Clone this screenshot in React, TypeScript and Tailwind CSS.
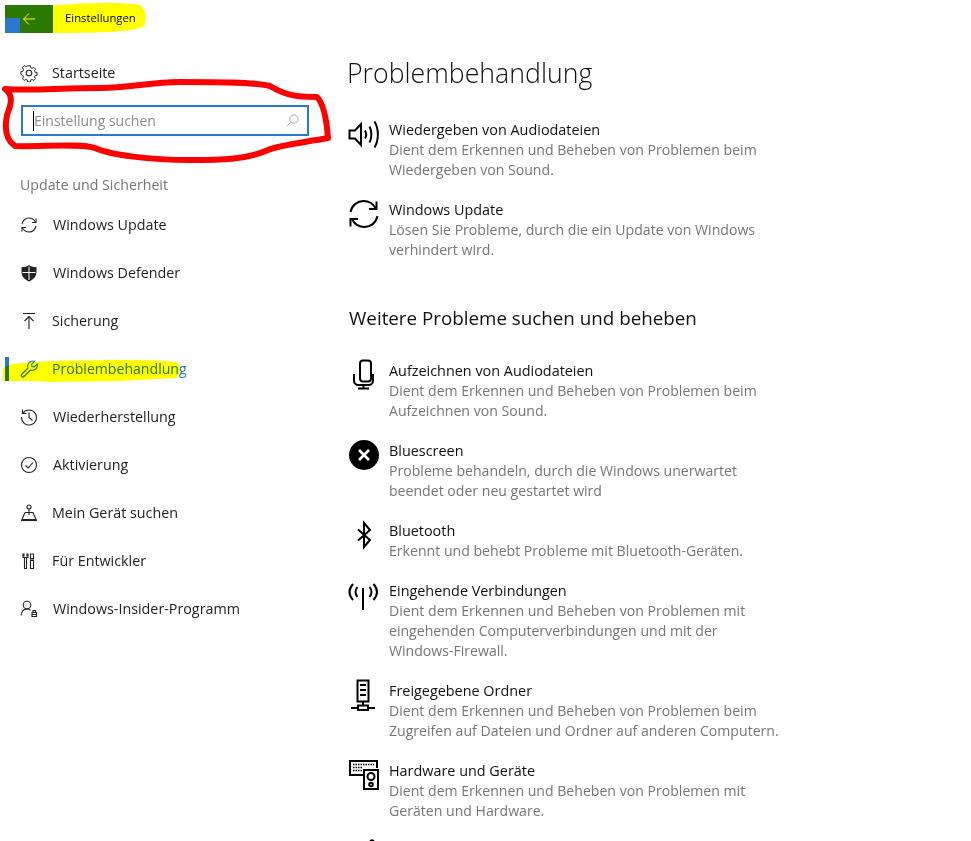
import type { ReactNode } from "react";

const FONT = "font-['Open_Sans','Noto_Sans',sans-serif]";

function SideIcon({ children }: { children: ReactNode }) {
	return (
		<svg
			viewBox="0 0 18 18"
			className="w-[18px] h-[18px] shrink-0"
			fill="none"
			stroke="currentColor"
			strokeWidth="1.100"
		>
			{children}
		</svg>
	);
}

function BigIcon({ children }: { children: ReactNode }) {
	return (
		<svg
			viewBox="0 0 32 32"
			className="w-8 h-8 shrink-0 -mt-0.5 text-black"
			fill="none"
			stroke="currentColor"
			strokeWidth="2"
		>
			{children}
		</svg>
	);
}

const sideItems: {
	label: string;
	icon: ReactNode;
	active?: boolean;
	wide?: boolean;
}[] = [
	{
		label: "Windows Update",
		wide: true,
		icon: (
			<>
				<path d="M2 8C3 4 6 2 9 2c3 0 5 1.500 6.500 4" />
				<path d="M16 2.500V6.500H12" />
				<path d="M16 10c-1 4-4 6-7 6-3 0-5-1.500-6.500-4" />
				<path d="M2 15.500V11.500H6" />
			</>
		),
	},
	{
		label: "Windows Defender",
		wide: true,
		icon: (
			<path
				d="M9 1c2 1.500 4.500 2.200 7.500 2.200V8c0 4.500-3 7.500-7.500 9.500C4.500 15.500 1.500 12.500 1.500 8V3.200C4.500 3.200 7 2.500 9 1zM8.500 2.500V8H2.500v1H8.500V16h1V9h6V8h-6V2.500z"
				fill="currentColor"
				fillRule="evenodd"
				stroke="none"
			/>
		),
	},
	{
		label: "Sicherung",
		icon: (
			<>
				<path d="M3 1.500H15" />
				<path d="M9 17V4.500" />
				<path d="M4.500 9L9 4.500L13.500 9" />
			</>
		),
	},
	{
		label: "Problembehandlung",
		active: true,
		icon: (
			<path d="M1.500 14.500L8 8c-.8-2.500 0-4.500 1.500-5.800C11 1 13 .8 14.500 1.300L11.500 4.300l.5 2.200 2.200.5 3-3c.5 2-.2 3.800-1.500 5-1.500 1.300-3.300 1.700-5.200 1L4 16.500c-.6.600-1.500.600-2.200 0-.7-.6-.8-1.400-.3-2z" />
		),
	},
	{
		label: "Wiederherstellung",
		wide: true,
		icon: (
			<>
				<path d="M3 5a7.500 7.500 0 1 1-1.500 4" />
				<path d="M2.500 1.500V5.500H6.500" />
				<path d="M9 4.500V9.500L12.500 12.500" />
			</>
		),
	},
	{
		label: "Aktivierung",
		wide: true,
		icon: (
			<>
				<circle cx="9" cy="9" r="7.500" />
				<path d="M5.500 9.500L8 12L13 6.500" />
			</>
		),
	},
	{
		label: "Mein Gerät suchen",
		icon: (
			<>
				<circle cx="9" cy="3" r="2" />
				<path d="M9 5V11" />
				<path d="M5 8.500H13L16 15.500H2L5 8.500" />
				<path d="M1 16.500H17" />
			</>
		),
	},
	{
		label: "Für Entwickler",
		icon: (
			<>
				<path d="M4 1.500V4.500M7 1.500V4.500M3 1.500V5.500H8V1.500M4.500 5.500V8M6.500 5.500V8M4.500 8V16.500H6.500V8" />
				<path d="M10.500 2H13.500V6.500H10.500ZM11 6.500V8.500H13V6.500M10.500 8.500H13.500V16.500H10.500Z" />
			</>
		),
	},
	{
		label: "Windows-Insider-Programm",
		wide: true,
		icon: (
			<>
				<circle cx="7" cy="5" r="3.800" />
				<path d="M1 15.500C1.500 11.500 3.500 9 7 9c1.500 0 2.800.5 3.500 1.500" />
				<path d="M12 12.500H16.500V16.500H12ZM13 12.500V10.500H15.500V12.500M12 14.500H16.500" />
			</>
		),
	},
];

const mainItems: {
	title: string;
	lines: string[];
	icon: ReactNode;
}[] = [
	{
		title: "Aufzeichnen von Audiodateien",
		lines: [
			"Dient dem Erkennen und Beheben von Problemen beim",
			"Aufzeichnen von Sound.",
		],
		icon: (
			<>
				<rect x="12" y="1.500" width="11" height="21" rx="3" />
				<path d="M6 15v6.500c0 2.500 2 4.500 4.500 4.500h10c2.500 0 4.500-2 4.500-4.500V15" />
				<path d="M15.500 26V29M10 29.500H21" />
			</>
		),
	},
	{
		title: "Bluescreen",
		lines: [
			"Probleme behandeln, durch die Windows unerwartet",
			"beendet oder neu gestartet wird",
		],
		icon: (
			<>
				<circle cx="16" cy="16" r="15" fill="currentColor" stroke="none" />
				<path
					d="M11 11L21 21M21 11L11 21"
					stroke="white"
					strokeWidth="2.600"
				/>
			</>
		),
	},
	{
		title: "Bluetooth",
		lines: ["Erkennt und behebt Probleme mit Bluetooth-Geräten."],
		icon: <path d="M10 10.500L22 21L16 28V4L22 11L10 21.500" />,
	},
	{
		title: "Eingehende Verbindungen",
		lines: [
			"Dient dem Erkennen und Beheben von Problemen mit",
			"eingehenden Computerverbindungen und mit der",
			"Windows-Firewall.",
		],
		icon: (
			<>
				<path d="M15 9V31" />
				<path d="M5 5Q-2 13 5 21" />
				<path d="M9.500 8Q5.500 13 9.500 18" />
				<path d="M21.500 8Q25.500 13 21.500 18" />
				<path d="M25.500 5Q32.500 13 25.500 21" />
			</>
		),
	},
	{
		title: "Freigegebene Ordner",
		lines: [
			"Dient dem Erkennen und Beheben von Problemen beim",
			"Zugreifen auf Dateien und Ordner auf anderen Computern.",
		],
		icon: (
			<>
				<rect x="9.500" y="1.500" width="11" height="21" />
				<path d="M12 6H18M12 11H18M12 16H18" />
				<path d="M15 22.500V26M3 29H10M20 29H27" />
				<rect x="10" y="26.500" width="10" height="4.500" />
			</>
		),
	},
	{
		title: "Hardware und Geräte",
		lines: [
			"Dient dem Erkennen und Beheben von Problemen mit",
			"Geräten und Hardware.",
		],
		icon: (
			<>
				<path d="M15 16H2V2H29V9" />
				<path
					d="M5 5.500H26M5 8.500H14M5 11.500H14"
					strokeDasharray="1.500 1"
					strokeWidth="1.500"
				/>
				<rect x="16" y="11" width="14" height="19" />
				<circle cx="23" cy="17.500" r="3.500" />
				<circle cx="23" cy="25.500" r="1.800" />
			</>
		),
	},
];

function MainRow({
	title,
	lines,
	icon,
}: {
	title: string;
	lines: string[];
	icon: ReactNode;
}) {
	return (
		<div className="flex mb-5">
			<div className="w-[41px] shrink-0 flex">
				<BigIcon>{icon}</BigIcon>
			</div>
			<div className="text-[14.1px] leading-5 whitespace-nowrap">
				<div className="text-[14.4px] text-[#111]">{title}</div>
				{lines.map((l) => (
					<div key={l} className="text-[#767676]">
						{l}
					</div>
				))}
			</div>
		</div>
	);
}

export default function App() {
	return (
		<div
			className={`${FONT} relative h-[841px] w-[971px] overflow-hidden bg-white flex`}
		>
			{/* Sidebar */}
			<div className="w-[348px] shrink-0">
				<div className="flex items-center h-7 mt-[5px] ml-[5px]">
					<div className="w-12 h-7 bg-[#2b79cc] flex items-center pl-[17px] text-white">
						<svg
							viewBox="0 0 14 14"
							className="w-[14px] h-[14px]"
							fill="none"
							stroke="currentColor"
							strokeWidth="1"
						>
							<path d="M13 7H1.500M7 1.500L1.500 7L7 12.500" />
						</svg>
					</div>
					<span className="ml-3 -mt-0.5 text-[11.3px] text-black">
						Einstellungen
					</span>
				</div>

				<div className="flex items-center h-12 mt-4 pl-5 gap-[14px] text-[14.3px] text-[#222]">
					<SideIcon>
						<circle cx="9" cy="9" r="2.800" />
						<path
							d="M7.500 1h3l.4 2.200 1.500.7 1.900-1.200 2 2-1.200 1.900.7 1.500 2.200.4v3l-2.200.4-.7 1.500 1.200 1.900-2 2-1.900-1.200-1.500.7-.4 2.200h-3l-.4-2.200-1.500-.7-1.900 1.200-2-2 1.200-1.900-.7-1.500L0 10.500v-3l2.200-.4.7-1.500L1.700 2.700l2-2 1.900 1.200 1.500-.7z"
							transform="translate(.9 .9) scale(.9)"
						/>
					</SideIcon>
					<span>Startseite</span>
				</div>

				{/* Search */}
				<div className="mt-2 ml-[21px] w-[288px] h-[31px] border-2 border-[#2b79cc] flex items-center pl-[10px] pr-2">
					<span className="w-px h-5 bg-black" />
					<span className="text-[14px] text-[#8c8c8c] flex-1">
						Einstellung suchen
					</span>
					<svg
						viewBox="0 0 14 14"
						className="w-[13px] h-[13px] text-[#a8a8a8]"
						fill="none"
						stroke="currentColor"
						strokeWidth="1"
					>
						<circle cx="8.500" cy="5.500" r="4.500" />
						<path d="M5.200 8.800L.8 13.200" />
					</svg>
				</div>

				<div className="mt-[39px] ml-5 text-[14.2px] leading-5 text-[#767676]">
					Update und Sicherheit
				</div>

				<div className="mt-[6px]">
					{sideItems.map((item) => (
						<div
							key={item.label}
							className={`relative flex items-center h-12 pl-5 ${
								item.wide ? "gap-[15px]" : "gap-[14px]"
							} ${item.active ? "text-[14.1px] text-[#2b79cc]" : "text-[14.3px] text-[#222]"}`}
						>
							{item.active && (
								<span className="absolute left-[5px] top-3 w-1 h-6 bg-[#2b79cc]" />
							)}
							<SideIcon>{item.icon}</SideIcon>
							<span>{item.label}</span>
						</div>
					))}
				</div>
			</div>

			{/* Main */}
			<div className="flex-1 min-w-0">
				<h1 className="mt-[53px] -ml-px text-[26.7px] leading-10 font-light text-[#111]">
					Problembehandlung
				</h1>
				<div className="mt-[27px]">
					<MainRow
						title="Wiedergeben von Audiodateien"
						lines={[
							"Dient dem Erkennen und Beheben von Problemen beim",
							"Wiedergeben von Sound.",
						]}
						icon={
							<>
								<path d="M1.500 12.500H7L13 6V27L7 20.500H1.500Z" />
								<path d="M17 12.500C18.500 15 18.500 18 17 20.500" />
								<path d="M21.500 8.500C24 13 24 20 21.500 24.500" />
								<path d="M26.500 3.500C31 11 31 22 26.500 29.500" />
							</>
						}
					/>
					<MainRow
						title="Windows Update"
						lines={[
							"Lösen Sie Probleme, durch die ein Update von Windows",
							"verhindert wird.",
						]}
						icon={
							<>
								<path d="M2.500 14C4 7 9.500 3 15.500 3c5 0 9.500 2.500 12 7" />
								<path d="M28.500 3.500V11H21" />
								<path d="M29.500 18C28 25 22.500 29 16.500 29c-5 0-9.500-2.500-12-7" />
								<path d="M2.500 28.500V21H10" />
							</>
						}
					/>
				</div>
				<h2 className="ml-px mt-[44px] mb-[29px] text-[18.8px] leading-7 font-normal text-[#111]">
					Weitere Probleme suchen und beheben
				</h2>
				{mainItems.map((item) => (
					<MainRow key={item.title} {...item} />
				))}
				{/* next row is cut off by the window, only the top of its icon shows */}
				<BigIcon>
					<path d="M22 2.500Q24 0 26 2.500" />
				</BigIcon>
			</div>

			{/* Marker annotations drawn over the screenshot */}
			<svg
				viewBox="0 0 971 841"
				className="absolute inset-0 w-[971px] h-[841px] pointer-events-none mix-blend-multiply"
				fill="none"
			>
				<path
					d="M5 5H60C80 3 125 2 140 5C146 9 147 20 144 26C135 32 100 33 60 33H20V18H5Z"
					fill="#ffff00"
				/>
				<path
					d="M3 368L9 365L20 363L50 361L110 360C140 360 170 360 178 363C181 368 180 375 175 378L120 381L50 382L30 381L9 381H3Z"
					fill="#ffff00"
				/>
			</svg>
			<svg
				viewBox="0 0 971 841"
				className="absolute inset-0 w-[971px] h-[841px] pointer-events-none"
				fill="none"
			>
				<path
					d="M5 89C30 91 60 88 100 88C130 88 150 82 180 82C215 82 255 82 270 86C285 95 295 97 317 97C325 105 327 125 328 138C300 143 280 145 268 150C245 160 220 160 190 160C150 160 110 155 95 148C80 143 40 147 15 146C6 140 4 130 7 115C11 105 14 95 5 89Z"
					stroke="#ff0000"
					strokeWidth="6"
					strokeLinejoin="round"
				/>
			</svg>
		</div>
	);
}
